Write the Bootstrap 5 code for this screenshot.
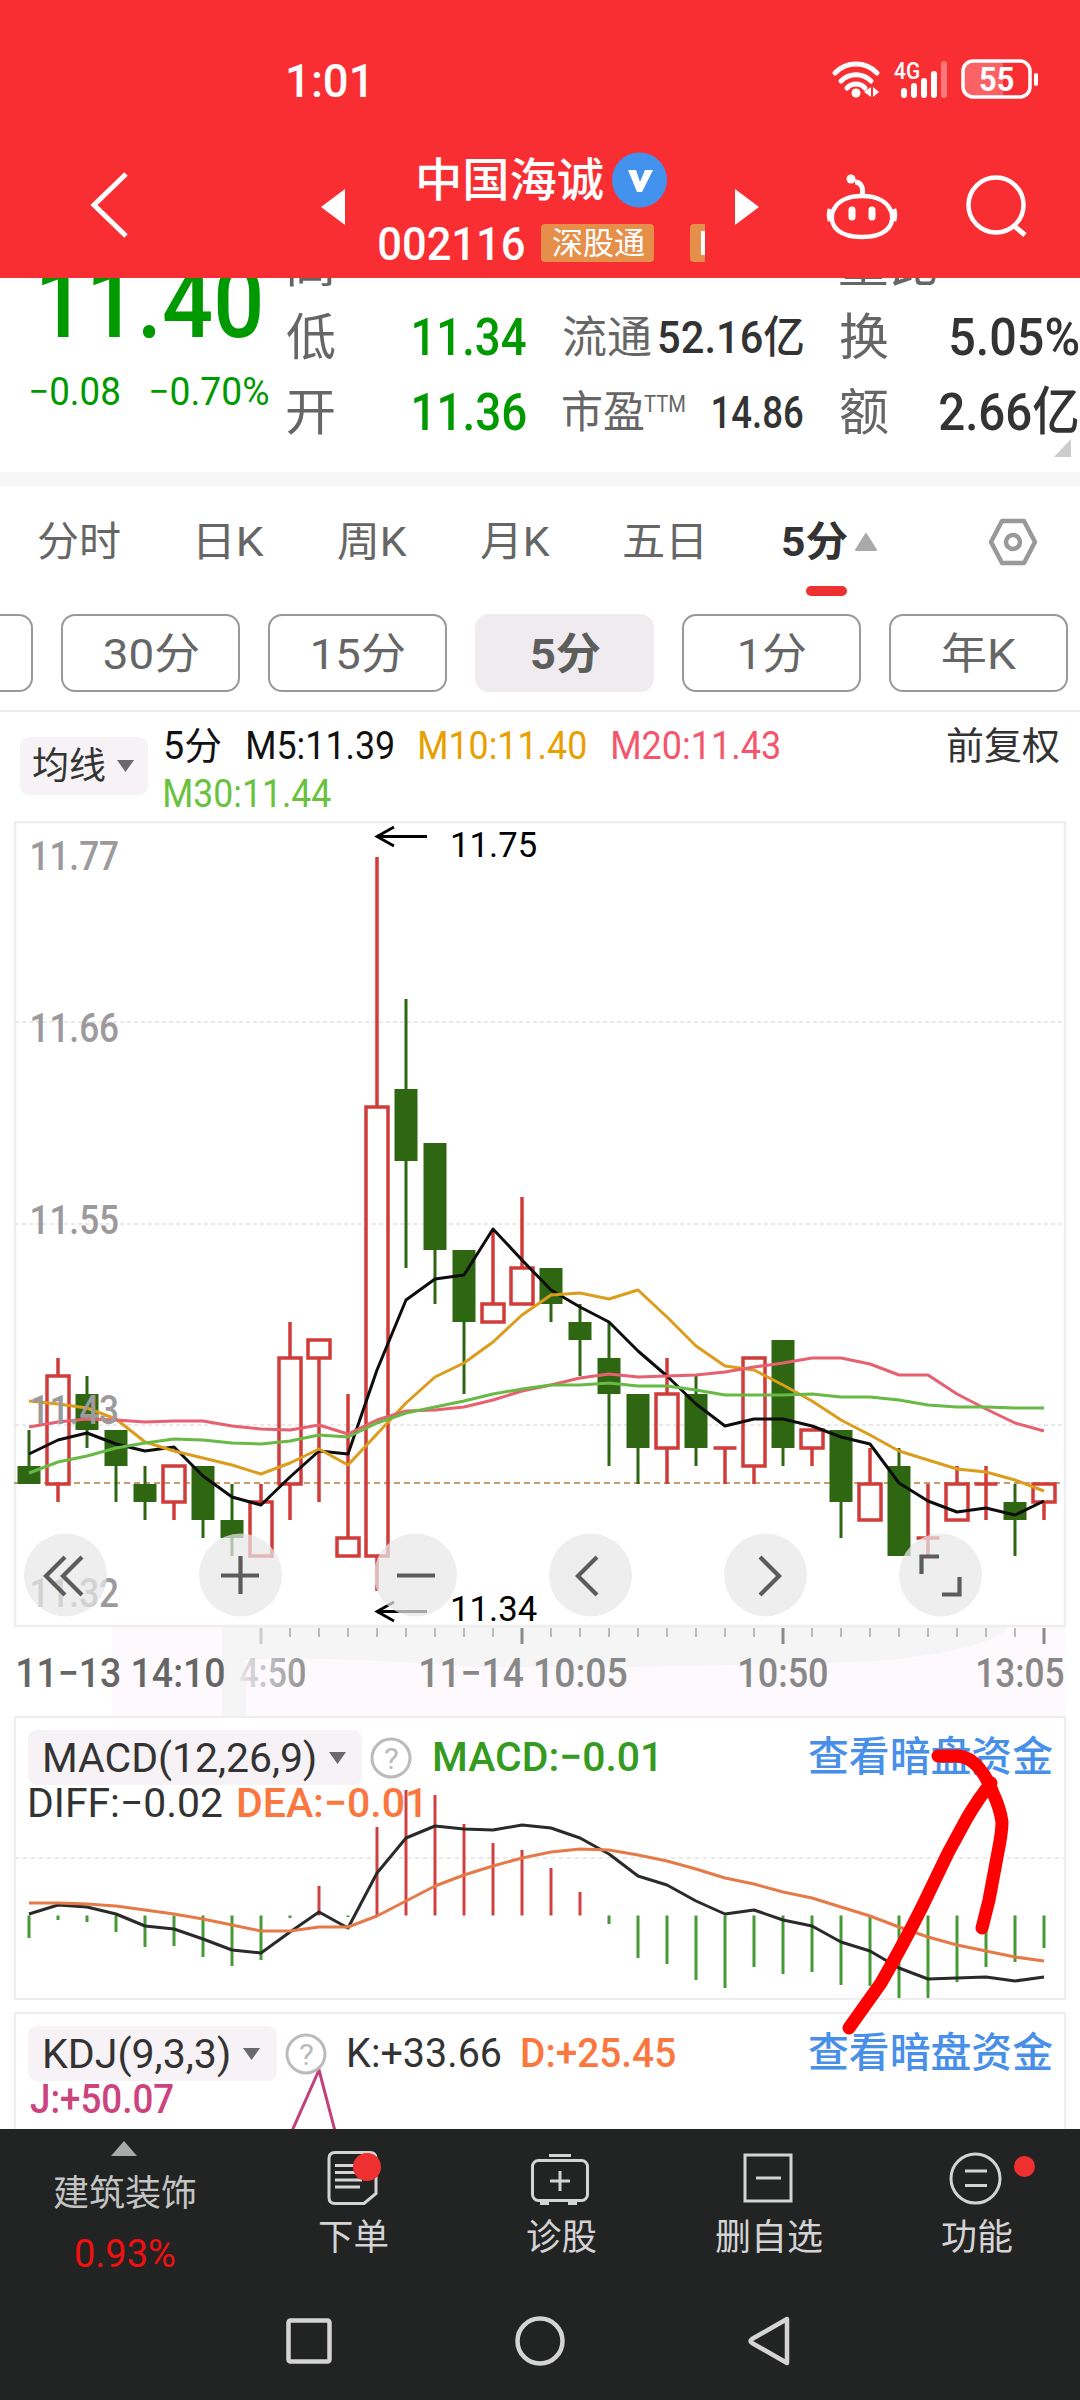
<!DOCTYPE html>
<html lang="zh-CN">
<head>
<meta charset="utf-8">
<meta name="viewport" content="width=device-width, initial-scale=1">
<title>中国海诚 002116</title>
<link href="https://cdn.jsdelivr.net/npm/bootstrap@5.3.0/dist/css/bootstrap.min.css" rel="stylesheet">
<style>
body{width:1080px;height:2400px;overflow:hidden;background:#fff;color:#333;font-family:Roboto,"Noto Sans CJK SC",sans-serif;line-height:1}
svg{display:block;flex:none}
svg text{white-space:pre}
.fit{display:block;flex:none;line-height:1;white-space:nowrap}
.fit>span{display:inline-block;transform-origin:0 50%}
/* header */
.app-head{height:278px;background:#f92e32;color:#fff}
.status-row{height:160px;padding:0 41px 0 287px}
.clock{font-size:47px;font-weight:500}
.title-row{height:128px;margin-top:-10px}
.title-row>.ico{height:114px}
.back{margin-left:89px;padding-bottom:5px}.prev{margin-left:190px}.mid{width:328px;margin-left:33px}
.next{margin-left:29px}.robot{margin-left:67px}.find{margin-left:67px}
.name-line{height:60px;gap:10px;padding-left:40px}
.name-line .fit{font-size:46px;font-weight:500}
.code-line{height:66px;gap:18px}
.code-line .num{font-size:47px;font-weight:500}
.tagx{background:#e68f4b;height:38px;width:113px;border-radius:4px;font-size:31px}
.tagx.cut{width:15px;margin-left:18px;border-radius:4px 0 0 4px;padding-left:11px}
.tagx.cut i{width:4px;height:24px;background:#fff}
/* quote */
.quote{height:194px;overflow:hidden;padding-left:30px}
.last-col{width:256px}
.green{color:#009a00}
.last-num{font-size:100px;font-weight:500;margin:-25px 0 20px 11px;height:100px}
.chg{font-size:39px;gap:32px}
.qgrid{display:grid;grid-template-columns:239px 240px 238px;grid-template-rows:71px 75px 75px;column-gap:37px;margin-top:-49px}
.qgrid .lb{color:#666;font-size:50px}
.qgrid .lm{color:#666;font-size:44px}
.qgrid .vl{font-size:52px}
.qgrid .vm{font-size:44px}
.ttm{color:#666;font-size:23px;margin-bottom:16px}
.corner{right:9px;top:439px}
.band{height:14px;background:#f7f7f7}
/* tabs */
.tabs{height:110px;padding:2px 42px 0 37px;color:#666;font-size:41px}
.g1{margin-left:79px}.g2{margin-left:74px}.g3{margin-left:74px}.g4{margin-left:74px}.g5{margin-left:81px}
.on{color:#333;font-weight:700}
.on-bar{width:41px;height:10px;border-radius:5px;background:#ef3030;left:806px;top:586px}
.pill-row{height:78px;gap:28px;margin:18px 0 18px -146px}
.pill{width:179px;flex:none;border:2px solid #999;border-radius:14px;color:#666;font-size:43px;padding-top:2px}
.pill.act{background:#efebef;border-color:#efebef;font-weight:700;color:#5c5e5c}
.hr1{height:2px;background:#ececec;margin:0}
/* moving averages */
.ma{height:110px;padding:15px 22px 0 20px}
.chip{background:#f6f2f6;border-radius:9px}
.ma .chip{width:128px;height:58px;font-size:37px;margin-top:10px;gap:12px;padding-left:12px}
.ma-vals{width:640px;margin-left:16px;column-gap:27px;font-size:38px;align-content:flex-start}
.ma-vals .fit{height:48px;line-height:38px}
.bl{color:#111}.m10{color:#e8a000}.m20{color:#f4566c}.m30{color:#68c23e}
.right-a{font-size:38px;margin-left:auto}
/* chart panels */
.kline{height:895px;margin-top:-1px}
.ind{height:284px}
.panel{margin:0 14px;border:2px solid #eee}
.ind{margin-bottom:12px;overflow:hidden;position:relative}
.kdj{height:117px;border-bottom:0;margin-bottom:0}
.ind-head{height:55px;margin:12px 12px 0;position:relative}
.ind-head .chip{height:55px;padding:2px 0 0 16px;font-size:41px;gap:14px}
.ind-sub{margin:-2px 0 0 13px;gap:16px;font-size:41px;position:relative}
.ind .plot{position:absolute;left:-16px;top:-2px}
.dea{color:#fb7740}.mac{color:#359a20}.lk{color:#478fe8;font-size:41px;font-weight:500}
.jj{color:#cc437e}
.k500{font-weight:500}
.big{font-size:41px;margin-left:21px}
.chip-macd{width:334px}.chip-kdj{width:249px}
/* bottom */
.dock{height:271px;background:#212422;color:#d5d3d6;position:relative}
.dock-row{height:150px}
.dock-item{width:208px;font-size:36px;padding-top:2px}
.dock-item svg{margin-bottom:15px}
.sector{width:248px;font-size:36px;color:#c4c4c4}
.pct{color:#f01010;margin-top:23px;font-size:38px}
.sector svg{margin:12px 0 20px}
.sys{height:120px;padding:32px 0 0 285px}
.ink{left:0;top:0;pointer-events:none}
</style>
<script src="https://cdn.jsdelivr.net/npm/bootstrap@5.3.0/dist/js/bootstrap.bundle.min.js"></script>
</head>
<body class="position-relative">
<header class="app-head">
  <div class="status-row d-flex align-items-center">
    <div class="fit clock" data-w="78">1:01</div>
    <div class="d-flex align-items-center ms-auto">
      <svg width="208" height="44" viewBox="831 58 208 44" fill="none" stroke="#fff" stroke-linecap="round">
        <path d="M835 73a29 29 0 0 1 42 0M841 81a21 21 0 0 1 30 0M847 88a12 12 0 0 1 18 0" stroke-width="5"/>
        <circle cx="856" cy="93" r="4.5" fill="#fff" stroke="none"/>
        <path d="M871 87v10l-7-5zM873 87v10l6-5z" fill="#fff" stroke="none"/>
        <path d="M904 91v4M914 86v9M924 81v14M934 74v21" stroke-width="6"/><path d="M944 64v31" stroke-width="6" opacity=".35"/>
        <text x="893" y="79" font-size="24" font-weight="500" fill="#fff" stroke="none" data-w="25">4G</text>
        <path d="M1003 62v34h-30q-10 0-10-10v-14q0-10 10-10z" fill="#fff" opacity=".25" stroke="none"/>
        <rect x="963" y="61" width="67" height="36" rx="10" stroke-width="3.5"/>
        <path d="M1036 75v9" stroke-width="4"/>
        <text x="979" y="91" font-size="34" font-weight="700" fill="#fff" stroke="none" data-w="34">55</text>
      </svg>
    </div>
  </div>
  <div class="title-row d-flex align-items-start">
    <div class="ico back d-flex align-items-center"><svg width="42" height="72" viewBox="88 169 42 72"><path d="M125 174L93 205l32 31" fill="none" stroke="#fff" stroke-width="5"/></svg></div>
    <div class="ico prev d-flex align-items-center"><svg width="24" height="36"><path d="M24 0v36L0 18z" fill="#fff"/></svg></div>
    <div class="mid">
      <div class="name-line d-flex align-items-center"><div class="fit" data-w="184">中国海诚</div>
        <svg width="55" height="56" viewBox="0 0 55 56"><circle cx="27.5" cy="28" r="27.5" fill="#4292ee"/><path d="M16 18h8l4 12 5-12h8l-11 22h-5z" fill="#fff"/></svg></div>
      <div class="code-line d-flex align-items-center"><div class="fit num" data-w="145">002116</div>
        <div class="tagx d-flex align-items-center justify-content-center"><div class="fit" data-w="92">深股通</div></div>
        <div class="tagx cut d-flex align-items-center"><i></i></div></div>
    </div>
    <div class="ico next d-flex align-items-center"><svg width="24" height="36"><path d="M0 0v36l24-18z" fill="#fff"/></svg></div>
    <div class="ico robot d-flex align-items-center"><svg width="72" height="68" viewBox="825 172 72 68" fill="none" stroke="#fff" stroke-width="4.5"><path d="M861 195c2-8-1-14-7-14" stroke-width="5"/><circle cx="850" cy="178" r="4.5" fill="#fff" stroke="none"/><path d="M861 195c17 0 27 7 30 18 2 14-9 23-30 23s-32-9-30-23c3-11 13-18 30-18z"/><path d="M829 208q-2 6 0 12M893 208q2 6 0 12"/><path d="M851 209v7M871 209v7" stroke-width="7" stroke-linecap="round"/></svg></div>
    <div class="ico find d-flex align-items-center"><svg width="64" height="64" viewBox="964 175 64 64" fill="none" stroke="#fff" stroke-width="4.5"><circle cx="995" cy="205" r="27.500"/><path d="M1012 225l12 10" stroke-width="5"/></svg></div>
  </div>
</header>

<section class="quote d-flex align-items-start">
  <div class="last-col green">
    <div class="fit last-num" data-w="218">11.40</div>
    <div class="chg d-flex"><div class="fit" data-w="88">−0.08</div><div class="fit" data-w="117">−0.70%</div></div>
  </div>
  <div class="qgrid">
    <div class="d-flex align-items-center justify-content-between"><div class="fit lb" data-w="46">高</div></div>
    <div></div>
    <div class="d-flex align-items-center"><div class="fit lb" data-w="97">量比</div></div>
    <div class="d-flex align-items-center justify-content-between"><div class="fit lb" data-w="48">低</div><div class="fit vl green k500" data-w="112">11.34</div></div>
    <div class="d-flex align-items-center justify-content-between"><div class="fit lm" data-w="88">流通</div><div class="fit vm k500" data-w="144">52.16亿</div></div>
    <div class="d-flex align-items-center justify-content-between"><div class="fit lb" data-w="48">换</div><div class="fit vl k500" data-w="127">5.05%</div></div>
    <div class="d-flex align-items-center justify-content-between"><div class="fit lb" data-w="47">开</div><div class="fit vl green k500" data-w="112">11.36</div></div>
    <div class="d-flex align-items-center"><div class="fit lm" data-w="81">市盈</div><div class="fit ttm" data-w="41">TTM</div><div class="fit vm ms-auto k500" data-w="90">14.86</div></div>
    <div class="d-flex align-items-center justify-content-between"><div class="fit lb" data-w="48">额</div><div class="fit vl k500" data-w="138">2.66亿</div></div>
  </div>
  <svg class="corner position-absolute" width="17" height="18"><path d="M17 0v18H0z" fill="#ccc"/></svg>
</section>
<div class="band"></div>

<nav class="tabs d-flex align-items-center">
  <div class="fit" data-w="82">分时</div><div class="fit g1" data-w="65">日K</div><div class="fit g2" data-w="69">周K</div><div class="fit g3" data-w="69">月K</div><div class="fit g4" data-w="78">五日</div>
  <div class="on g5 d-flex align-items-center"><div class="fit" data-w="64">5分</div><svg class="ms-2" width="24" height="20"><path d="M12 2L22 18H2z" fill="#aaa" stroke="#aaa" stroke-width="2" stroke-linejoin="round"/></svg></div>
  <svg class="ms-auto" width="50" height="48" viewBox="989 517 50 48" fill="none" stroke="#999" stroke-width="4.5" stroke-linejoin="round"><path d="M1003 520h22l11 21-11 21h-22l-11-21z"/><circle cx="1014" cy="541" r="7"/></svg>
</nav>
<div class="on-bar position-absolute"></div>
<div class="pill-row d-flex">
  <div class="pill"></div>
  <div class="pill d-flex align-items-center justify-content-center"><div class="fit" data-w="94">30分</div></div>
  <div class="pill d-flex align-items-center justify-content-center"><div class="fit" data-w="92">15分</div></div>
  <div class="pill act d-flex align-items-center justify-content-center"><div class="fit" data-w="68">5分</div></div>
  <div class="pill d-flex align-items-center justify-content-center"><div class="fit" data-w="66">1分</div></div>
  <div class="pill d-flex align-items-center justify-content-center"><div class="fit" data-w="73">年K</div></div>
</div>
<div class="hr1"></div>

<section class="ma d-flex align-items-start">
  <div class="chip d-flex align-items-center"><div class="fit" data-w="72">均线</div><svg width="19" height="13"><path d="M1 0h17L9.500 12z" fill="#6a6a6a"/></svg></div>
  <div class="ma-vals d-flex flex-wrap">
    <div class="fit bl" data-w="56">5分</div><div class="fit bl" data-w="145">M5:11.39</div><div class="fit m10" data-w="166">M10:11.40</div><div class="fit m20" data-w="166">M20:11.43</div><div class="fit m30" data-w="166">M30:11.44</div>
  </div>
  <div class="fit right-a" data-w="111">前复权</div>
</section>

<section class="kline"><svg id="kchart" width="1080" height="895" viewBox="0 821 1080 895"></svg></section>

<section class="ind panel">
  <svg class="plot" id="macd" width="1080" height="284" viewBox="0 1716 1080 284"></svg>
  <div class="ind-head d-flex align-items-center">
    <div class="chip chip-macd d-flex align-items-center"><div class="fit" data-w="270">MACD(12,26,9)</div><svg width="19" height="13"><path d="M1 0h17L9.500 12z" fill="#6a6a6a"/></svg></div>
    <svg class="ms-2" width="42" height="42"><circle cx="21" cy="21" r="19" fill="none" stroke="#bbb" stroke-width="3"/><text x="14" y="32" font-size="29" fill="#bbb" data-w="13">?</text></svg>
    <div class="fit mac k500 big" data-w="222">MACD:−0.01</div>
    <div class="fit lk ms-auto" data-w="244">查看暗盘资金</div>
  </div>
  <div class="ind-sub d-flex"><div class="fit" data-w="192">DIFF:−0.02</div><div class="fit dea k500" data-w="183">DEA:−0.01</div></div>
</section>
<section class="ind panel kdj">
  <svg class="plot" width="1080" height="117" viewBox="0 2012 1080 117"><path d="M292 2131L319 2070L335 2131" fill="none" stroke="#c0417c" stroke-width="3"/></svg>
  <div class="ind-head d-flex align-items-center">
    <div class="chip chip-kdj d-flex align-items-center"><div class="fit" data-w="184">KDJ(9,3,3)</div><svg width="19" height="13"><path d="M1 0h17L9.500 12z" fill="#6a6a6a"/></svg></div>
    <svg class="ms-2" width="42" height="42"><circle cx="21" cy="21" r="19" fill="none" stroke="#bbb" stroke-width="3"/><text x="14" y="32" font-size="29" fill="#bbb" data-w="13">?</text></svg>
    <div class="fit big" data-w="152">K:+33.66</div>
    <div class="fit dea k500 big" data-w="153">D:+25.45</div>
    <div class="fit lk ms-auto" data-w="244">查看暗盘资金</div>
  </div>
  <div class="ind-sub d-flex k500"><div class="fit jj" data-w="143">J:+50.07</div></div>
</section>

<footer class="dock">
  <div class="dock-row d-flex">
    <div class="sector d-flex flex-column align-items-center">
      <svg width="26" height="15"><path d="M13 0l13 15H0z" fill="#aaa"/></svg>
      <div class="fit" data-w="142">建筑装饰</div>
      <div class="fit pct" data-w="99">0.93%</div>
    </div>
    <div class="dock-item d-flex flex-column align-items-center">
      <svg width="62" height="74" viewBox="321 2132 62 74" fill="none" stroke="#d5d3d6" stroke-width="3"><path d="M335 2153.500h35q6 0 6 6v35l-12 10h-29q-6 0-6-6v-39q0-6 6-6z"/><path d="M335 2166.500h22M335 2173.500h22M335 2181h27M335 2188h25"/><circle cx="367" cy="2168" r="14" fill="#ef3030" stroke="none"/></svg>
      <div class="fit" data-w="69">下单</div></div>
    <div class="dock-item d-flex flex-column align-items-center">
      <svg width="62" height="74" viewBox="529 2132 62 74" fill="none" stroke="#d5d3d6" stroke-width="3"><rect x="532.500" y="2161.500" width="55" height="40" rx="6"/><path d="M549 2156.500h22M550 2182h20M560 2172v20"/><path d="M540 2204.500h9M568 2204.500h9" stroke-width="4"/></svg>
      <div class="fit" data-w="69">诊股</div></div>
    <div class="dock-item d-flex flex-column align-items-center">
      <svg width="62" height="74" viewBox="736 2132 62 74" fill="none" stroke="#d5d3d6" stroke-width="3"><rect x="744" y="2156" width="46" height="46"/><path d="M755 2179h25"/></svg>
      <div class="fit" data-w="106">删自选</div></div>
    <div class="dock-item d-flex flex-column align-items-center">
      <svg width="130" height="74" viewBox="911 2132 130 74" fill="none" stroke="#d5d3d6" stroke-width="3"><circle cx="975.500" cy="2179.500" r="24.500"/><path d="M965 2172h22M965 2186.500h22"/><circle cx="1024.500" cy="2167.500" r="10.500" fill="#ef3030" stroke="none"/></svg>
      <div class="fit" data-w="70">功能</div></div>
  </div>
  <div class="sys d-flex">
    <svg width="510" height="60" viewBox="285 2311 510 60" fill="none" stroke="#d5d3d6" stroke-width="4.500" stroke-linejoin="round"><rect x="288.500" y="2320.500" width="41" height="41" rx="2"/><circle cx="540" cy="2341" r="22.500"/><path d="M787 2319v44l-35-20q-3-2 0-4z"/></svg>
  </div>
</footer>

<svg class="ink position-absolute" width="1080" height="2400" fill="none" stroke="#f00" stroke-width="13" stroke-linecap="round" stroke-linejoin="round">
  <path d="M849 2028L881 1983C896 1957 908 1935 922 1907L948 1853L967 1818Q978 1799 991 1783"/>
  <path d="M938 1756H958Q970 1757 979 1768Q988 1779 993 1793Q1000 1808 1002 1822Q1002 1832 998 1852L989 1900L982 1928"/>
</svg>

<script>
const X=i=>29+29*i;
const line=(a,c,w)=>`<polyline fill="none" stroke="${c}" stroke-width="${w}" stroke-linejoin="round" points="${a.map((y,i)=>X(i)+','+y).join(' ')}"/>`;
/* kind, high, body top, body bottom, low */
const K=[['g',1430,1466,1484,1484],['r',1358,1376,1484,1502],['g',1376,1394,1430,1448],['g',1430,1430,1466,1502],['g',1466,1484,1502,1520],['r',1466,1466,1502,1520],['g',1466,1466,1520,1538],['g',1484,1520,1538,1556],['r',1484,1502,1556,1556],['r',1322,1358,1484,1520],['r',1340,1340,1358,1502],['r',1394,1538,1556,1556],['r',857,1107,1556,1591],['g',999,1089,1161,1268],['g',1143,1143,1250,1304],['g',1250,1250,1322,1394],['r',1230,1304,1322,1322],['r',1197,1268,1304,1304],['g',1268,1268,1304,1322],['g',1304,1322,1340,1376],['g',1322,1358,1394,1466],['g',1394,1394,1448,1484],['r',1358,1394,1448,1484],['g',1376,1394,1448,1466],['r',1448,1448,1448,1484],['r',1358,1358,1466,1484],['g',1340,1340,1448,1466],['r',1430,1430,1448,1466],['g',1430,1430,1502,1538],['r',1448,1484,1520,1520],['g',1448,1466,1556,1556],['r',1484,1538,1538,1556],['r',1466,1484,1520,1520],['r',1466,1484,1484,1520],['g',1484,1502,1520,1556],['r',1484,1484,1502,1520]];
const M5=[1454,1440,1433,1444,1451,1447,1476,1497,1505,1477,1451,1454,1370,1300,1279,1275,1229,1260,1290,1307,1322,1351,1376,1404,1426,1419,1419,1426,1437,1444,1483,1501,1512,1508,1515,1501];
const M10=[1401,1404,1408,1419,1442,1451,1458,1465,1474,1463,1449,1465,1434,1403,1377,1363,1342,1315,1295,1293,1299,1290,1317,1346,1366,1370,1385,1401,1420,1435,1451,1460,1469,1472,1480,1491];
const M20=[1427,1422,1419,1420,1422,1421,1421,1426,1429,1430,1425,1434,1420,1411,1410,1407,1400,1391,1385,1378,1374,1377,1376,1375,1372,1367,1363,1358,1358,1364,1375,1375,1394,1409,1423,1431];
const M30=[1473,1462,1456,1448,1443,1439,1440,1443,1444,1441,1435,1437,1423,1413,1407,1401,1394,1389,1385,1385,1383,1386,1386,1390,1395,1395,1395,1394,1397,1397,1400,1405,1407,1407,1408,1408];
let s='';
s+='<path d="M112 1627H1065V1716H112z" fill="#fdf9fd"/><path d="M222 1627H1008Q990 1650 880 1661Q700 1668 480 1667Q300 1655 246 1660V1716H222z" fill="#f6f5f6"/>';
s+='<rect x="15" y="822" width="1050" height="804" fill="#fff" stroke="#eee" stroke-width="2.500"/>';
s+='<path d="M15 1022H1064M15 1224H1064M15 1425H1064" stroke="#e2e2e2" stroke-width="1.500" stroke-dasharray="4 3"/>';
s+='<path d="M14 1483H1064" stroke="#c89c6c" stroke-width="2" stroke-dasharray="6 4"/>';
K.forEach(([k,h,t,b,l],i)=>{const x=X(i);
 if(k=='g')s+=`<path d="M${x} ${h}V${l}" stroke="#2f6612" stroke-width="3"/><rect x="${x-11.5}" y="${t}" width="23" height="${b-t}" fill="#2f6612"/>`;
 else{s+=`<path d="M${x} ${h}V${t}M${x} ${b}V${l}" stroke="#d03c3a" stroke-width="3.5"/>`;
  s+=t==b?`<path d="M${x-11.5} ${t}h23" stroke="#d03c3a" stroke-width="3.5"/>`:`<rect x="${x-11}" y="${t}" width="22" height="${b-t}" fill="none" stroke="#d03c3a" stroke-width="3.5"/>`;}
});
s+=line(M5,'#0d0d0d',3)+line(M10,'#dc9c1c',3)+line(M20,'#e6606f',3)+line(M30,'#68b945',3);
[['11.77',870],['11.66',1042],['11.55',1234],['11.43',1424],['11.32',1607]].forEach(([t,y])=>s+=`<text x="31" y="${y}" font-size="41" fill="#9c9a9c" font-weight="500" data-w="86">${t}</text>`);
s+='<path d="M427 836.500H377M394 827L377 836.500L394 846M427 1611.500H377M394 1602L377 1611.500L394 1621" fill="none" stroke="#000" stroke-width="2.800"/>';
s+='<text x="452" y="857" font-size="36" fill="#000" data-w="83">11.75</text><text x="452" y="1621" font-size="36" fill="#000" data-w="84">11.34</text>';
[65,240,415,590,765,940].forEach(x=>s+=`<circle cx="${x+.5}" cy="1575" r="41.500" fill="#e7e7e7" fill-opacity=".72"/>`);
s+='<path d="M65 1557L46 1576L65 1595M82 1557L63 1576L82 1595M221 1575.500H259M240.500 1556V1594M397 1575.500H435M597 1557L578 1576L597 1595M760 1557L779 1576L760 1595M921.500 1574V1556.500H939M959.500 1577V1594.500H942" fill="none" stroke="#5c5c5c" stroke-width="4.200"/>';
for(let i=8;i<36;i++)s+=(i-8)%9?`<path d="M${X(i)} 1628v9" stroke="#bbb" stroke-width="2"/>`:`<path d="M${X(i)} 1628v16" stroke="${i==8?'#ccc':'#8a8a8a'}" stroke-width="3"/>`;
s+='<defs><linearGradient id="fade"><stop offset="0" stop-color="#e6e4e6"/><stop offset="1" stop-color="#909090"/></linearGradient></defs>';
[[17,206,'11−13 14:10','#666'],[239,65,'4:50','url(#fade)'],[420,206,'11−14 10:05','#888'],[739,87,'10:50','#888'],[977,86,'13:05','#888']].forEach(([x,w,t,c])=>s+=`<text x="${x}" y="1687" font-size="40" fill="${c}" font-weight="500" data-w="${w}">${t}</text>`);
kchart.innerHTML=s;

const B=[1938,1920,1922,1932,1947,1946,1957,1966,1960,1918,1886,1917,1827,1790,1795,1824,1843,1850,1868,1892,1924,1958,1964,1980,1988,1967,1974,1972,1985,1986,1999,1999,1982,1967,1962,1948];
const DIF=[1914,1905,1907,1914,1926,1929,1939,1950,1953,1932,1912,1928,1873,1838,1826,1829,1830,1825,1828,1838,1854,1876,1885,1901,1914,1910,1920,1926,1942,1951,1968,1979,1978,1977,1981,1977];
const DEA=[1903,1903,1904,1906,1910,1914,1919,1925,1931,1931,1927,1927,1916,1901,1886,1875,1866,1858,1852,1849,1850,1855,1861,1869,1878,1884,1892,1898,1907,1916,1927,1937,1945,1951,1957,1961];
macd.innerHTML='<path d="M15 1858H1064" stroke="#e8e8e8" stroke-width="2" stroke-dasharray="4 4"/>'+B.map((y,i)=>`<path d="M${X(i)} 1915.500V${y}" stroke="${y<1915?'#d04040':'#459a35'}" stroke-width="3"/>`).join('')+line(DIF,'#2a2a2a',3)+line(DEA,'#e57a48',3);

/* condense each label so that its drawn width equals data-w */
const ctx=document.createElement('canvas').getContext('2d');
document.querySelectorAll('[data-w]').forEach(el=>{
 const c=getComputedStyle(el),w=+el.dataset.w,t=el.textContent;
 ctx.font=`${c.fontWeight} ${c.fontSize} ${c.fontFamily}`;
 const m=ctx.measureText(t),k=w/(m.actualBoundingBoxLeft+m.actualBoundingBoxRight),o=m.actualBoundingBoxLeft*k+1;
 if(el.tagName=='text'){el.setAttribute('transform',`translate(${+el.getAttribute('x')+o} ${el.getAttribute('y')}) scale(${k} 1)`);el.removeAttribute('x');el.removeAttribute('y');}
 else{el.style.width=w+'px';const sp=document.createElement('span');sp.textContent=t;sp.style.transform=`translateX(${o}px) scaleX(${k})`;el.replaceChildren(sp);}
});
</script>
</body>
</html>
